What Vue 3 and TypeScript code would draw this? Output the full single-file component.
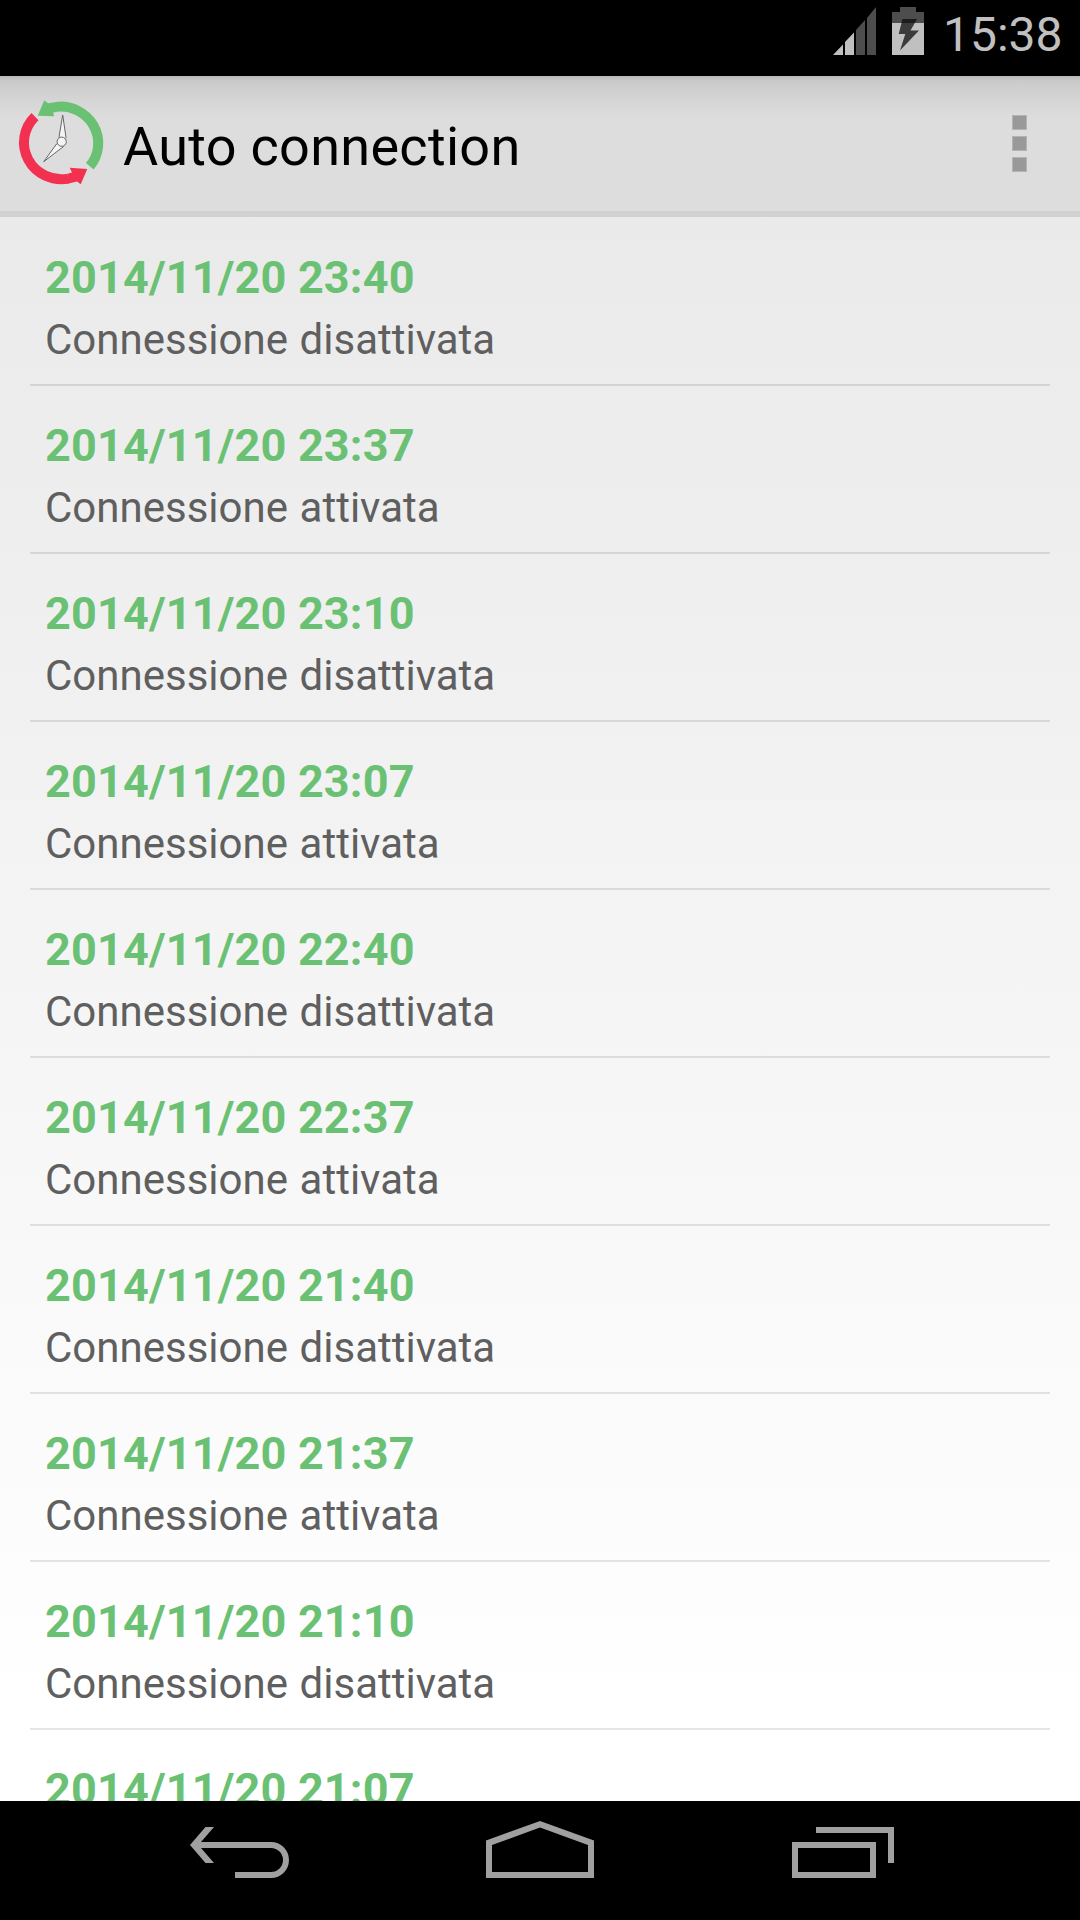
<script setup lang="ts">
interface LogEntry {
  time: string
  active: boolean
}

const entries: LogEntry[] = [
  { time: '2014/11/20 23:40', active: false },
  { time: '2014/11/20 23:37', active: true },
  { time: '2014/11/20 23:10', active: false },
  { time: '2014/11/20 23:07', active: true },
  { time: '2014/11/20 22:40', active: false },
  { time: '2014/11/20 22:37', active: true },
  { time: '2014/11/20 21:40', active: false },
  { time: '2014/11/20 21:37', active: true },
  { time: '2014/11/20 21:10', active: false },
  { time: '2014/11/20 21:07', active: true },
]
</script>

<template>
  <div class="screen">
    <header class="status">
      <svg class="signal" width="44" height="48" viewBox="0 0 44 48">
        <path d="M0 48L10 37.5V48Z M12 35L21 25.5V48H12Z" fill="#c0c0c0" />
        <path d="M23 23L32 13V48H23Z M34 11L43 0V48H34Z" fill="#4d4d4d" />
      </svg>
      <svg class="battery" width="32" height="48" viewBox="0 0 32 48">
        <path d="M8 0H24V5H32V16H0V5H8Z" fill="#4d4d4d" />
        <path d="M0 16H32V48H0Z" fill="#c0c0c0" />
        <path d="M10.5 12H25L18.5 23.5H27L8 43.5L13.3 27H6.7Z" fill="#3b3b3b" />
        <path d="M10.5 12H25L22.7 16H9.5Z" fill="#1c1c1c" />
      </svg>
      <span class="clock">15:38</span>
    </header>

    <div class="action-bar">
      <svg class="logo" width="96" height="96" viewBox="0 0 96 96">
        <path class="green-arc" d="M46 10.9A37.6 36.6 0 0 1 79.8 70.3" />
        <path class="green-head" d="M27.7 19.7L34.3 4.3L38 7.3L47 6V15.7L43 16.7L44.3 20.3Z" />
        <path class="red-arc" d="M25 20.7A37.6 36.6 0 0 0 58.3 82.6" />
        <path class="red-head" d="M59.7 71.7L77.3 73L70.7 88.3L67 85.5L57.5 87.7V77.8L62 76.4Z" />
        <g class="hands">
          <path d="M52.7 19L56 41.5L51.7 46L49 41Z" />
          <path d="M33.7 65.7L46.5 48L51.7 45.7L53.3 50.7Z" />
          <circle cx="51.7" cy="45.7" r="4.6" />
        </g>
      </svg>
      <h1 class="title">Auto connection</h1>
      <div class="overflow"><i></i><i></i><i></i></div>
    </div>

    <main class="list">
      <div v-for="entry in entries" :key="entry.time" class="row">
        <div class="time">{{ entry.time }}</div>
        <div class="state">Connessione {{ entry.active ? 'attivata' : 'disattivata' }}</div>
      </div>
    </main>

    <nav class="nav">
      <svg width="100" height="60" viewBox="0 0 100 60">
        <path d="M15.5 7H24L11 22H81A18 18 0 0 1 81 58H45V52H81A12 12 0 0 0 81 28H11L24 43H15.5L0 25Z" />
      </svg>
      <svg width="108" height="58" viewBox="0 0 108 58">
        <path d="M0 19.5L54 0L108 19.5V57H0Z M6 24V51H102V24L54 6.5Z" fill-rule="evenodd" />
      </svg>
      <svg width="102" height="52" viewBox="0 0 102 52">
        <path d="M24 0H102V36H96V6H24Z M0 15H84V51H0Z M6 21V45H78V21Z" fill-rule="evenodd" />
      </svg>
    </nav>
  </div>
</template>

<style>
body { margin: 0; background: #000; }
</style>

<style scoped>
.screen {
  width: 1080px;
  height: 1920px;
  display: flex;
  flex-direction: column;
  overflow: hidden;
  font-family: Roboto, "Liberation Sans", sans-serif;
}
.status {
  height: 76px;
  flex: none;
  display: flex;
  background: #000;
}
.signal { margin: 7px 0 0 833px; }
.battery { margin: 7px 0 0 15px; }
.clock {
  margin: 5px 0 0 19px;
  font-size: 48px;
  line-height: 59px;
  color: #c0c0c0;
}
.action-bar {
  height: 135px;
  flex: none;
  display: flex;
  border-bottom: 6px solid #d1d1d1;
  background: linear-gradient(#b9b9b9 0, #cacaca 5px, #d3d3d3 20px, #dddddd 42px);
}
.logo { margin: 20px 0 0 10px; }
.title {
  margin: 36px 0 0 17px;
  font-size: 54px;
  line-height: 69px;
  font-weight: 400;
  letter-spacing: 0.3px;
  color: #000;
}
.overflow {
  margin: 39px 53px 0 auto;
  display: flex;
  flex-direction: column;
  gap: 6px;
}
.overflow i {
  width: 13px;
  height: 13px;
  border: 1px solid #b3b3b3;
  background: #999;
}
.green-arc, .red-arc { fill: none; stroke-width: 10; }
.green-arc { stroke: #6ac174; }
.red-arc { stroke: #f2304f; }
.green-head { fill: #6ac174; }
.red-head { fill: #f2304f; }
.hands { fill: #f4f4f4; stroke: #666; stroke-width: 1; stroke-linejoin: round; }
.list {
  height: 1583px;
  flex: none;
  padding-top: 1px;
  overflow: hidden;
  background: linear-gradient(#eaeaea, #fff 1500px);
}
.row {
  height: 123px;
  margin: 0 30px;
  padding: 30px 15px 13px;
  border-bottom: 2px solid rgba(0, 0, 0, 0.1);
}
.time {
  margin-bottom: 1px;
  font-size: 45px;
  line-height: 59px;
  font-weight: 700;
  letter-spacing: 0.16px;
  color: #6ac174;
}
.state {
  font-size: 42px;
  line-height: 63px;
  word-spacing: 1.2px;
  color: #5f5f5f;
}
.nav {
  flex: 1;
  display: flex;
  background: #000;
  fill: #a0a0a0;
}
.nav svg:nth-child(1) { margin: 19px 0 0 190px; }
.nav svg:nth-child(2) { margin: 20px 0 0 196px; }
.nav svg:nth-child(3) { margin: 26px 0 0 198px; }
</style>
